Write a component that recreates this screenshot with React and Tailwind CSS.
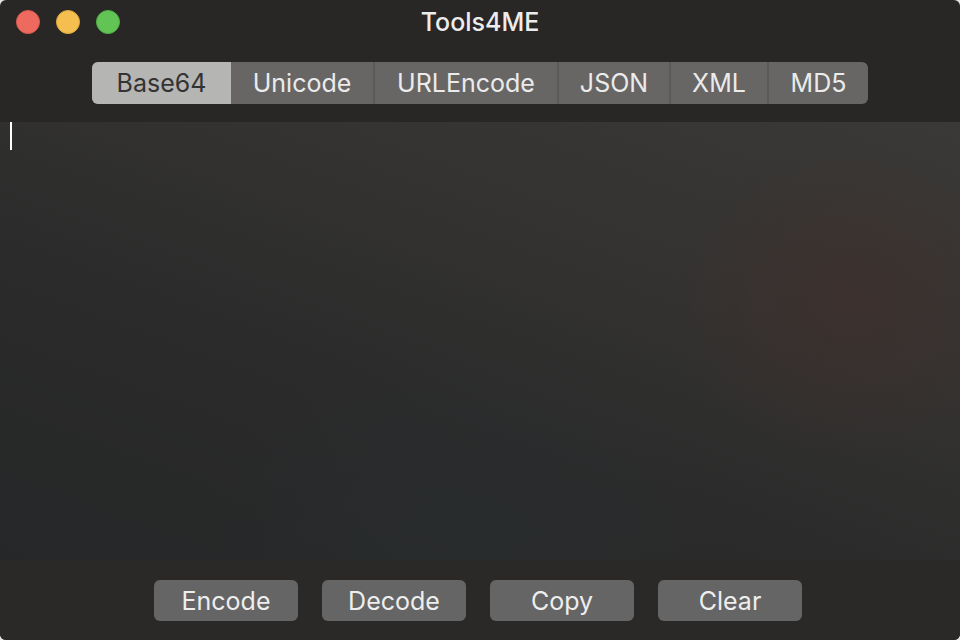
import React from "react";

const tabs = [
  { label: "Base64", w: "w-[139px]", active: true },
  { label: "Unicode", w: "w-[142px]" },
  { label: "URLEncode", w: "w-[184px]" },
  { label: "JSON", w: "w-[112px]" },
  { label: "XML", w: "w-[98px]" },
  { label: "MD5", w: "w-[101px]" },
];

const buttons = ["Encode", "Decode", "Copy", "Clear"];

export default function App() {
  return (
    <div className="w-[960px] h-[640px] bg-[#e6e6e6] overflow-hidden" style={{ fontFamily: '"Inter", "Liberation Sans", sans-serif' }}>
      <div className="w-full h-full rounded-[6px] overflow-hidden bg-[#282726] flex flex-col">
        {/* Title bar */}
        <div className="relative h-[44px] flex items-center shrink-0">
          <div className="flex items-center gap-[16px] pl-[16px]">
            <span className="w-[24px] h-[24px] rounded-full bg-[#ee6a5f] border border-[#d95a50]" />
            <span className="w-[24px] h-[24px] rounded-full bg-[#f5bf4f] border border-[#dea93d]" />
            <span className="w-[24px] h-[24px] rounded-full bg-[#61c454] border border-[#51ad45]" />
          </div>
          <div className="absolute inset-0 flex items-center justify-center pt-[2px] text-[25px] font-medium text-[#ececec] pointer-events-none">
            Tools4ME
          </div>
        </div>
        {/* Toolbar */}
        <div className="h-[78px] shrink-0 flex justify-center pt-[18px]">
          <div className="flex h-[42px] rounded-[6px] overflow-hidden bg-[#676665]">
            {tabs.map((t, i) => (
              <div
                key={t.label}
                className={`${t.w} flex items-center justify-center pt-[2px] text-[25px] ${
                  t.active ? "bg-[#b5b5b4] text-[#333333]" : "text-[#ebebeb]"
                } ${i > 1 ? "border-l-2 border-[#5b5a59]" : ""}`}
              >
                {t.label}
              </div>
            ))}
          </div>
        </div>
        {/* Text area */}
        <div className="relative h-[438px] shrink-0 bg-[linear-gradient(20deg,#262728_0%,#2a2a2a_35%,#333231_65%,#3a3937_100%)]">
          <div className="absolute inset-0 bg-[radial-gradient(ellipse_180px_160px_at_850px_180px,rgba(70,45,40,0.45),transparent)]" />
          <div className="absolute inset-0 bg-[radial-gradient(ellipse_260px_200px_at_460px_420px,rgba(40,48,52,0.35),transparent)]" />
          <div className="absolute left-[10px] top-[0px] w-[2px] h-[28px] bg-white" />
        </div>
        {/* Bottom bar */}
        <div className="flex-1 flex justify-center gap-[24px] pt-[20px] pr-[4px] bg-[#2a2928]">
          {buttons.map((b) => (
            <div
              key={b}
              className="w-[144px] h-[41px] rounded-[6px] bg-[#656565] flex items-center justify-center pt-[2px] text-[25px] text-[#eeeeee]"
            >
              {b}
            </div>
          ))}
        </div>
      </div>
    </div>
  );
}
